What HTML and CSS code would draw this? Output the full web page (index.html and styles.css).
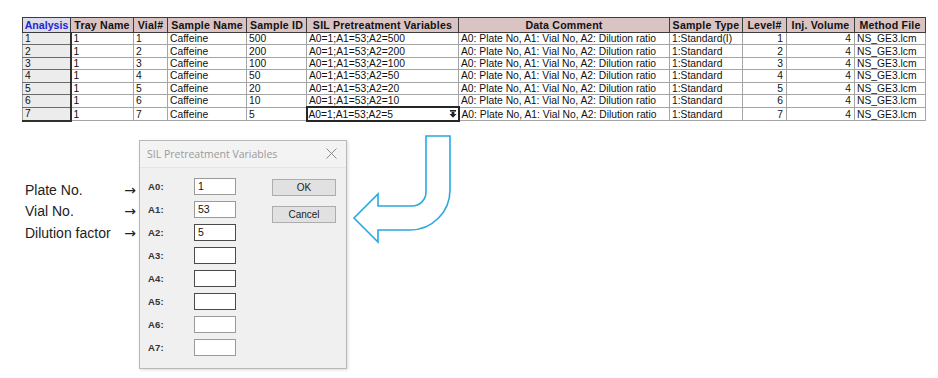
FILE: index.html
```html
<!DOCTYPE html>
<html>
<head>
<meta charset="utf-8">
<link rel="stylesheet" href="styles.css">
</head>
<body>
<div class="page">
  <table class="grid">
    <colgroup>
      <col style="width:48px"><col style="width:63px"><col style="width:34px"><col style="width:79px"><col style="width:60px"><col style="width:152px"><col style="width:211px"><col style="width:73px"><col style="width:44px"><col style="width:68px"><col style="width:71px">
    </colgroup>
    <thead>
      <tr>
        <th class="h-analysis">Analysis</th><th>Tray Name</th><th>Vial#</th><th>Sample Name</th><th>Sample ID</th><th>SIL Pretreatment Variables</th><th>Data Comment</th><th>Sample Type</th><th>Level#</th><th>Inj. Volume</th><th>Method File</th>
      </tr>
    </thead>
    <tbody>
      <tr><td class="rowhead">1</td><td>1</td><td>1</td><td>Caffeine</td><td>500</td><td>A0=1;A1=53;A2=500</td><td>A0: Plate No, A1: Vial No, A2: Dilution ratio</td><td>1:Standard(I)</td><td class="num">1</td><td class="num">4</td><td>NS_GE3.lcm</td></tr>
      <tr><td class="rowhead">2</td><td>1</td><td>2</td><td>Caffeine</td><td>200</td><td>A0=1;A1=53;A2=200</td><td>A0: Plate No, A1: Vial No, A2: Dilution ratio</td><td>1:Standard</td><td class="num">2</td><td class="num">4</td><td>NS_GE3.lcm</td></tr>
      <tr><td class="rowhead">3</td><td>1</td><td>3</td><td>Caffeine</td><td>100</td><td>A0=1;A1=53;A2=100</td><td>A0: Plate No, A1: Vial No, A2: Dilution ratio</td><td>1:Standard</td><td class="num">3</td><td class="num">4</td><td>NS_GE3.lcm</td></tr>
      <tr><td class="rowhead">4</td><td>1</td><td>4</td><td>Caffeine</td><td>50</td><td>A0=1;A1=53;A2=50</td><td>A0: Plate No, A1: Vial No, A2: Dilution ratio</td><td>1:Standard</td><td class="num">4</td><td class="num">4</td><td>NS_GE3.lcm</td></tr>
      <tr><td class="rowhead">5</td><td>1</td><td>5</td><td>Caffeine</td><td>20</td><td>A0=1;A1=53;A2=20</td><td>A0: Plate No, A1: Vial No, A2: Dilution ratio</td><td>1:Standard</td><td class="num">5</td><td class="num">4</td><td>NS_GE3.lcm</td></tr>
      <tr><td class="rowhead">6</td><td>1</td><td>6</td><td>Caffeine</td><td>10</td><td>A0=1;A1=53;A2=10</td><td>A0: Plate No, A1: Vial No, A2: Dilution ratio</td><td>1:Standard</td><td class="num">6</td><td class="num">4</td><td>NS_GE3.lcm</td></tr>
      <tr class="last"><td class="rowhead">7</td><td>1</td><td>7</td><td>Caffeine</td><td>5</td><td class="selected"><div class="sel-inner"><span>A0=1;A1=53;A2=5</span><svg class="dd" width="8" height="8" viewBox="0 0 8 8"><rect x="1" y="0" width="6" height="1.6" fill="#222"/><path d="M2.6 2 H5.4 V4 H7.5 L4 7.8 L0.5 4 H2.6 Z" fill="#222"/></svg></div></td><td>A0: Plate No, A1: Vial No, A2: Dilution ratio</td><td>1:Standard</td><td class="num">7</td><td class="num">4</td><td>NS_GE3.lcm</td></tr>
    </tbody>
  </table>

  <div class="lower">
    <div class="notes">
      <div class="note"><span>Plate No.</span><span class="arr">→</span></div>
      <div class="note"><span>Vial No.</span><span class="arr">→</span></div>
      <div class="note"><span>Dilution factor</span><span class="arr">→</span></div>
    </div>

    <div class="dialog">
      <div class="titlebar">
        <span class="title">SIL Pretreatment Variables</span>
        <svg class="close" width="11" height="11" viewBox="0 0 11 11"><path d="M0.5 0.5 L10.5 10.5 M10.5 0.5 L0.5 10.5" stroke="#8a8a8a" stroke-width="1"/></svg>
      </div>
      <div class="dbody">
        <div class="fields">
          <div class="field"><label>A0:</label><div class="box light">1</div></div>
          <div class="field"><label>A1:</label><div class="box light">53</div></div>
          <div class="field"><label>A2:</label><div class="box dark">5</div></div>
          <div class="field"><label>A3:</label><div class="box dark"></div></div>
          <div class="field"><label>A4:</label><div class="box dark"></div></div>
          <div class="field"><label>A5:</label><div class="box dark"></div></div>
          <div class="field"><label>A6:</label><div class="box light"></div></div>
          <div class="field"><label>A7:</label><div class="box light"></div></div>
        </div>
        <div class="buttons">
          <div class="btn">OK</div>
          <div class="btn">Cancel</div>
        </div>
      </div>
    </div>

    <svg class="uturn" width="100" height="112" viewBox="0 0 100 112">
      <path d="M74 2 L98 2 L98 56 A40 40 0 0 1 58 96 L26 96 L26 108 L2 84 L26 60 L26 72 L60 72 A14 14 0 0 0 74 58 Z" fill="none" stroke="#2aa8e0" stroke-width="1.6" stroke-linejoin="miter"/>
    </svg>
  </div>
</div>
</body>
</html>
```
FILE: styles.css
```css
html, body {
  margin: 0;
  padding: 0;
  background: #ffffff;
}
.page {
  width: 938px;
  height: 378px;
  padding: 17px 0 0 22px;
  box-sizing: border-box;
  font-family: "Liberation Sans", Arial, sans-serif;
}
.grid {
  border-collapse: collapse;
  table-layout: fixed;
  width: 903px;
  font-size: 10.3px;
  color: #111;
}
.grid th {
  height: 14px;
  padding: 0 1px;
  background: #d9c3c3;
  border: 1px solid #3c3c3c;
  font-weight: bold;
  font-size: 10.6px;
  letter-spacing: 0.2px;
  text-align: center;
  white-space: nowrap;
  overflow: hidden;
  line-height: 13px;
}
.grid th.h-analysis {
  background: #dcdcea;
  color: #2424d0;
  letter-spacing: 0;
  padding: 0;
}
.grid td {
  height: 11.4px;
  padding: 0 2px;
  border: 1px solid #a4a4a4;
  white-space: nowrap;
  overflow: hidden;
  line-height: 11px;
  background: #fff;
}
.grid td.rowhead {
  background: #ececec;
  border-right: 2px solid #303030;
  border-bottom: 1px solid #6a6a6a;
}
.grid tr.last td.rowhead {
  border-bottom: 2px solid #303030;
}
.grid td.num {
  text-align: right;
  padding-right: 3px;
}
.grid td.selected {
  border: 2px solid #262626;
  padding: 0 1px;
}
.sel-inner {
  display: flex;
  align-items: center;
  justify-content: space-between;
}
.dd {
  flex: none;
}

.lower {
  display: flex;
  align-items: flex-start;
  margin-top: 12px;
  padding-left: 3px;
}
.notes {
  width: 111px;
  margin-top: 46px;
  display: flex;
  flex-direction: column;
  font-size: 14px;
  color: #222;
}
.note {
  display: flex;
  justify-content: space-between;
  height: 21.5px;
  line-height: 21.5px;
}
.arr {
  font-family: "DejaVu Sans", sans-serif;
  font-size: 14px;
}

.dialog {
  width: 208px;
  height: 229px;
  margin-left: 3px;
  margin-top: 6px;
  background: #f0f0f0;
  border: 1px solid #b8b8b8;
  box-sizing: border-box;
  box-shadow: 1px 1px 3px rgba(0,0,0,0.15);
  font-family: "Liberation Sans", Arial, sans-serif;
}
.titlebar {
  height: 26px;
  display: flex;
  align-items: center;
  justify-content: space-between;
  padding: 0 9px 0 7px;
  background: #f3f3f3;
  border-bottom: 1px solid #e4e4e4;
}
.title {
  font-family: "Open Sans", sans-serif;
  font-size: 10.5px;
  color: #9a9a9a;
}
.dbody {
  display: flex;
  padding: 10px 0 0 8px;
}
.fields {
  display: flex;
  flex-direction: column;
  gap: 6px;
}
.field {
  display: flex;
  align-items: center;
  height: 17px;
}
.field label {
  width: 46px;
  font-size: 9.5px;
  font-weight: bold;
  color: #333;
  letter-spacing: 0.2px;
}
.box {
  width: 42px;
  height: 17px;
  box-sizing: border-box;
  background: #fff;
  font-size: 10.5px;
  color: #111;
  padding-left: 3px;
  line-height: 15px;
}
.box.light {
  border: 1px solid #9a9a9a;
}
.box.dark {
  border: 1px solid #4a4a4a;
}
.buttons {
  display: flex;
  flex-direction: column;
  gap: 10px;
  margin-left: 36px;
  margin-top: 1px;
}
.btn {
  width: 64px;
  height: 17px;
  box-sizing: border-box;
  background: #e1e1e1;
  border: 1px solid #adadad;
  font-size: 10px;
  text-align: center;
  line-height: 15px;
  color: #222;
}
.uturn {
  margin-left: 5px;
  margin-top: 0;
}
```
